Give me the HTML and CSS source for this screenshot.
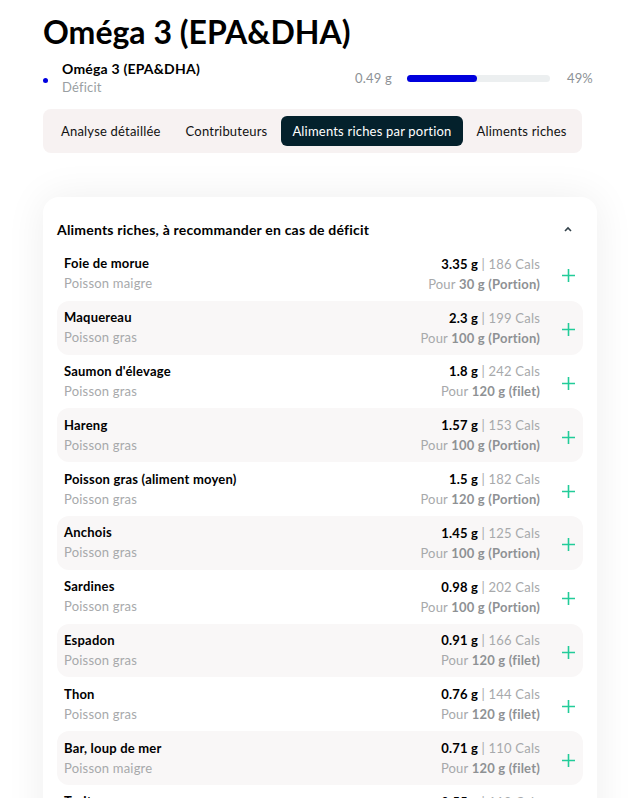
FILE: index.html
```html
<!DOCTYPE html>
<html>
<head>
    <link rel="stylesheet" href="styles.css">
</head>
<body>
<div class="page">
    <h1>Oméga 3 (EPA&amp;DHA)</h1>

    <div class="nutrient">
        <span class="dot"></span>
        <div class="nutrient-name">
            <div class="name">Oméga 3 (EPA&amp;DHA)</div>
            <div class="status">Déficit</div>
        </div>
        <div class="amount">0.49 g</div>
        <div class="bar"><div class="bar-fill" style="width: 49%"></div></div>
        <div class="percent">49%</div>
    </div>

    <div class="tabs">
        <div class="tab">Analyse détaillée</div>
        <div class="tab">Contributeurs</div>
        <div class="tab active">Aliments riches par portion</div>
        <div class="tab">Aliments riches</div>
    </div>

    <div class="card">
        <div class="card-head">
            <h2>Aliments riches, à recommander en cas de déficit</h2>
            <svg class="chevron" width="10" height="6" viewBox="0 0 10 6">
                <path d="M2 5 L5 2 L8 5" fill="none" stroke="#33414a" stroke-width="1.6"/>
            </svg>
        </div>

        <div class="food">
            <div class="food-left">
                <div class="food-name">Foie de morue</div>
                <div class="food-cat">Poisson maigre</div>
            </div>
            <div class="food-right">
                <div><b>3.35 g</b> | 186 Cals</div>
                <div>Pour <span class="portion">30 g (Portion)</span></div>
            </div>
            <svg class="add" width="13" height="13" viewBox="0 0 13 13"><path d="M6.5 0 V13 M0 6.5 H13" stroke="#22cc99" stroke-width="1.6"/></svg>
        </div>

        <div class="food">
            <div class="food-left">
                <div class="food-name">Maquereau</div>
                <div class="food-cat">Poisson gras</div>
            </div>
            <div class="food-right">
                <div><b>2.3 g</b> | 199 Cals</div>
                <div>Pour <span class="portion">100 g (Portion)</span></div>
            </div>
            <svg class="add" width="13" height="13" viewBox="0 0 13 13"><path d="M6.5 0 V13 M0 6.5 H13" stroke="#22cc99" stroke-width="1.6"/></svg>
        </div>

        <div class="food">
            <div class="food-left">
                <div class="food-name">Saumon d'élevage</div>
                <div class="food-cat">Poisson gras</div>
            </div>
            <div class="food-right">
                <div><b>1.8 g</b> | 242 Cals</div>
                <div>Pour <span class="portion">120 g (filet)</span></div>
            </div>
            <svg class="add" width="13" height="13" viewBox="0 0 13 13"><path d="M6.5 0 V13 M0 6.5 H13" stroke="#22cc99" stroke-width="1.6"/></svg>
        </div>

        <div class="food">
            <div class="food-left">
                <div class="food-name">Hareng</div>
                <div class="food-cat">Poisson gras</div>
            </div>
            <div class="food-right">
                <div><b>1.57 g</b> | 153 Cals</div>
                <div>Pour <span class="portion">100 g (Portion)</span></div>
            </div>
            <svg class="add" width="13" height="13" viewBox="0 0 13 13"><path d="M6.5 0 V13 M0 6.5 H13" stroke="#22cc99" stroke-width="1.6"/></svg>
        </div>

        <div class="food">
            <div class="food-left">
                <div class="food-name">Poisson gras (aliment moyen)</div>
                <div class="food-cat">Poisson gras</div>
            </div>
            <div class="food-right">
                <div><b>1.5 g</b> | 182 Cals</div>
                <div>Pour <span class="portion">120 g (Portion)</span></div>
            </div>
            <svg class="add" width="13" height="13" viewBox="0 0 13 13"><path d="M6.5 0 V13 M0 6.5 H13" stroke="#22cc99" stroke-width="1.6"/></svg>
        </div>

        <div class="food">
            <div class="food-left">
                <div class="food-name">Anchois</div>
                <div class="food-cat">Poisson gras</div>
            </div>
            <div class="food-right">
                <div><b>1.45 g</b> | 125 Cals</div>
                <div>Pour <span class="portion">100 g (Portion)</span></div>
            </div>
            <svg class="add" width="13" height="13" viewBox="0 0 13 13"><path d="M6.5 0 V13 M0 6.5 H13" stroke="#22cc99" stroke-width="1.6"/></svg>
        </div>

        <div class="food">
            <div class="food-left">
                <div class="food-name">Sardines</div>
                <div class="food-cat">Poisson gras</div>
            </div>
            <div class="food-right">
                <div><b>0.98 g</b> | 202 Cals</div>
                <div>Pour <span class="portion">100 g (Portion)</span></div>
            </div>
            <svg class="add" width="13" height="13" viewBox="0 0 13 13"><path d="M6.5 0 V13 M0 6.5 H13" stroke="#22cc99" stroke-width="1.6"/></svg>
        </div>

        <div class="food">
            <div class="food-left">
                <div class="food-name">Espadon</div>
                <div class="food-cat">Poisson gras</div>
            </div>
            <div class="food-right">
                <div><b>0.91 g</b> | 166 Cals</div>
                <div>Pour <span class="portion">120 g (filet)</span></div>
            </div>
            <svg class="add" width="13" height="13" viewBox="0 0 13 13"><path d="M6.5 0 V13 M0 6.5 H13" stroke="#22cc99" stroke-width="1.6"/></svg>
        </div>

        <div class="food">
            <div class="food-left">
                <div class="food-name">Thon</div>
                <div class="food-cat">Poisson gras</div>
            </div>
            <div class="food-right">
                <div><b>0.76 g</b> | 144 Cals</div>
                <div>Pour <span class="portion">120 g (filet)</span></div>
            </div>
            <svg class="add" width="13" height="13" viewBox="0 0 13 13"><path d="M6.5 0 V13 M0 6.5 H13" stroke="#22cc99" stroke-width="1.6"/></svg>
        </div>

        <div class="food">
            <div class="food-left">
                <div class="food-name">Bar, loup de mer</div>
                <div class="food-cat">Poisson maigre</div>
            </div>
            <div class="food-right">
                <div><b>0.71 g</b> | 110 Cals</div>
                <div>Pour <span class="portion">120 g (filet)</span></div>
            </div>
            <svg class="add" width="13" height="13" viewBox="0 0 13 13"><path d="M6.5 0 V13 M0 6.5 H13" stroke="#22cc99" stroke-width="1.6"/></svg>
        </div>

        <div class="food">
            <div class="food-left">
                <div class="food-name">Truite</div>
                <div class="food-cat">Poisson gras</div>
            </div>
            <div class="food-right">
                <div><b>0.55 g</b> | 119 Cals</div>
                <div>Pour <span class="portion">100 g (Portion)</span></div>
            </div>
            <svg class="add" width="13" height="13" viewBox="0 0 13 13"><path d="M6.5 0 V13 M0 6.5 H13" stroke="#22cc99" stroke-width="1.6"/></svg>
        </div>
    </div>
</div>
</body>
</html>
```

FILE: styles.css
```css
*{
    margin: 0;
    padding: 0;
    box-sizing: border-box;
}
body {
    font-family: Lato, "Open Sans", sans-serif;
    background: #fff;
    color: #000;
    height: 798px;
    overflow: hidden;
    letter-spacing: 0.2px;
}

.page {
    padding: 13px 43px 0 43px;
}

h1 {
    font-size: 32px;
    font-weight: 700;
    line-height: 38px;
    letter-spacing: 0;
}

.nutrient {
    display: flex;
    align-items: center;
    margin-top: 9px;
    height: 36px;
    padding-right: 4px;
}

.dot {
    width: 5px;
    height: 5px;
    border-radius: 50%;
    background: #0000e0;
    margin: 4px 14px 0 0;
}

.nutrient-name {
    flex: 1;
}

.name {
    font-size: 14px;
    font-weight: 700;
    line-height: 18px;
}

.status {
    font-size: 13px;
    color: #9a9fa3;
    line-height: 19px;
}

.amount {
    font-size: 13px;
    color: #8d9296;
    margin-right: 15px;
}

.bar {
    width: 143px;
    height: 7px;
    border-radius: 4px;
    background: #eceff0;
}

.bar-fill {
    height: 100%;
    border-radius: 4px;
    background: #0000dd;
}

.percent {
    font-size: 13px;
    color: #8d9296;
    width: 43px;
    text-align: right;
}

.tabs {
    display: flex;
    align-items: center;
    gap: 3px;
    margin-top: 13px;
    width: 539px;
    height: 44px;
    padding: 0 7px;
    background: #f7f2f2;
    border-radius: 8px;
}

.tab {
    flex-shrink: 0;
    white-space: nowrap;
    font-size: 13px;
    padding: 7px 11px;
    border-radius: 6px;
    color: #111;
}

.active {
    background: #04212c;
    color: #fff;
}

.card {
    margin-top: 44px;
    width: 554px;
    background: #fff;
    border-radius: 16px;
    padding: 20px 14px 0 14px;
    box-shadow: 0 0 40px rgba(0, 0, 0, 0.07);
    height: 700px;
}

.card-head {
    display: flex;
    align-items: center;
    justify-content: space-between;
    height: 24px;
    padding-right: 10px;
    margin-bottom: 6px;
}

h2 {
    font-size: 14px;
    font-weight: 700;
}

.food {
    display: flex;
    align-items: center;
    height: 53.8px;
    padding-left: 7px;
    border-radius: 12px;
}

.food:nth-child(odd) {
    background: #f9f7f7;
}

.food-left {
    flex: 1;
}

.food-name {
    font-size: 13px;
    font-weight: 700;
    line-height: 19px;
}

.food-cat, .food-right {
    font-size: 13px;
    color: #a7a9ab;
    line-height: 20px;
}

.food-right {
    text-align: right;
}

.food-right b {
    color: #000;
}

.portion {
    color: #8e9194;
    font-weight: 700;
}

.add {
    margin: 4px 8px 0 22px;
}
```
